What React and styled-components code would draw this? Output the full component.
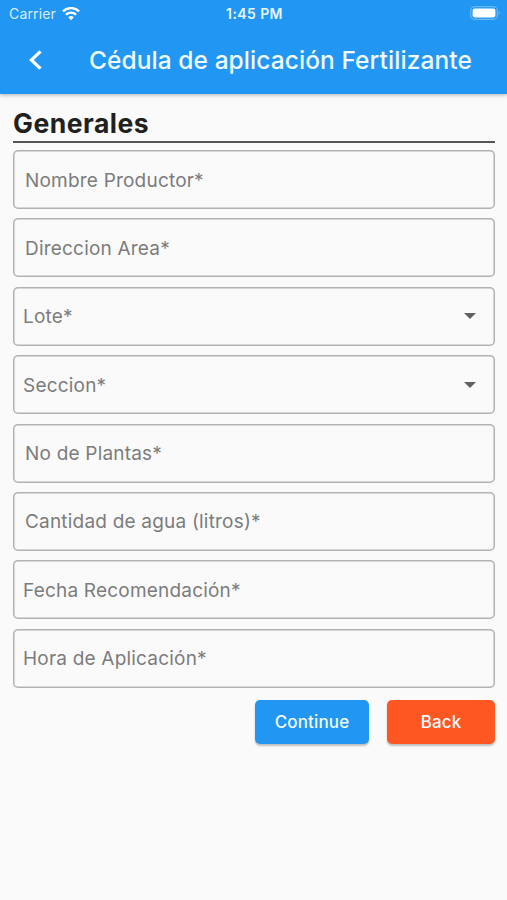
import React from "react";
import styled, { createGlobalStyle } from "styled-components";

const GlobalStyle = createGlobalStyle`
  * {
    box-sizing: border-box;
  }

  body {
    margin: 0;
    background: #fafafa;
    font-family: Inter, "Liberation Sans", sans-serif;
  }
`;

const Screen = styled.div`
  height: 900px;
  overflow: hidden;
  background: #fafafa;
`;

const Header = styled.header`
  height: 94px;
  background: #2196f3;
  color: #fff;
  box-shadow: 0 1px 4px rgba(0, 0, 0, 0.3);
`;

const StatusBar = styled.div`
  height: 27px;
  display: grid;
  grid-template-columns: 1fr auto 1fr;
  align-items: center;
  padding: 0 7px 0 9px;
`;

const Carrier = styled.div`
  display: flex;
  align-items: center;
  gap: 6px;
  font-size: 14px;
  letter-spacing: 0.15px;
  color: #d9eefd;
`;

const Clock = styled.div`
  font-size: 14px;
  font-weight: 600;
  letter-spacing: 0.4px;
  color: #eaf6ff;
`;

const BatteryIcon = styled.svg`
  justify-self: end;
  margin-top: -1px;
`;

const AppBar = styled.div`
  height: 65px;
  display: flex;
  align-items: center;
`;

const BackLink = styled.button`
  width: 89px;
  height: 65px;
  padding: 0 0 0 28px;
  border: 0;
  background: none;
  display: flex;
  align-items: center;
`;

const Title = styled.h1`
  margin: 0;
  font-size: 24.5px;
  font-weight: 500;
  line-height: 30px;
  white-space: nowrap;
  letter-spacing: 0.07px;
  color: #f0faff;
`;

const Form = styled.form`
  padding: 14px 12px 0 13px;
`;

const SectionTitle = styled.h2`
  height: 35px;
  margin: 0 0 7px;
  border-bottom: 2px solid #555;
  font-size: 26.5px;
  font-weight: 700;
  line-height: 31px;
  letter-spacing: 0.5px;
  color: #202020;
`;

const Fields = styled.div`
  display: flex;
  flex-direction: column;
  gap: 9.4px;
`;

const Field = styled.div`
  height: 59px;
  display: flex;
  align-items: center;
  justify-content: space-between;
  padding: 0 19px 0 ${props => (props.$inset ? "12px" : "10px")};
  border-radius: 5px;
  box-shadow: inset 0 0 0 1.5px #b2b2b2;
`;

const Label = styled.span`
  padding-top: 2px;
  font-size: 19px;
  line-height: 24px;
  letter-spacing: 0.2px;
  color: #7c7c7c;
`;

const Actions = styled.div`
  display: flex;
  justify-content: flex-end;
  gap: 18px;
  margin-top: 12px;
`;

const Button = styled.button`
  width: ${props => props.width};
  height: 44px;
  padding: 0;
  border: 0;
  border-radius: 5px;
  background: ${props => props.color};
  box-shadow: 0 2px 2px rgba(0, 0, 0, 0.24);
  font-family: inherit;
  font-size: 17px;
  font-weight: 500;
  letter-spacing: 0.15px;
  color: #f0faff;
`;

const fields = [
  { label: "Nombre Productor*", inset: true },
  { label: "Direccion Area*", inset: true },
  { label: "Lote*", dropdown: true },
  { label: "Seccion*", dropdown: true },
  { label: "No de Plantas*", inset: true },
  { label: "Cantidad de agua (litros)*", inset: true },
  { label: "Fecha Recomendación*" },
  { label: "Hora de Aplicación*" }
];

const Wifi = () => (
  <svg width="18" height="14" viewBox="0 0 18 14" fill="none">
    <path d="M1 4.4a11.4 11.4 0 0 1 16 0" stroke="#fff" strokeWidth="2.4" />
    <path d="M3.9 7.7a7.3 7.3 0 0 1 10.2 0" stroke="#fff" strokeWidth="2.3" />
    <path d="M9 13.2l-2.8-2.9a4 4 0 0 1 5.6 0z" fill="#fff" />
  </svg>
);

const Battery = () => (
  <BatteryIcon width="30" height="14" viewBox="0 0 30 14">
    <rect x="0.7" y="0.7" width="26.6" height="12.6" rx="3.8" fill="none" stroke="#6bb8f7" strokeWidth="1.2" />
    <rect x="2.6" y="2.5" width="22.8" height="9" rx="2.2" fill="#fff" />
    <path d="M28.6 5v4c1.6-.7 1.6-3.3 0-4z" fill="#6bb8f7" />
  </BatteryIcon>
);

const Chevron = () => (
  <svg width="15" height="20" viewBox="0 0 15 20" fill="none">
    <path d="M12.5 1.3L3.4 10l9.1 8.7" stroke="#fff" strokeWidth="3.2" />
  </svg>
);

const Caret = () => (
  <svg width="12" height="6" viewBox="0 0 12 6">
    <path d="M0 0h12L6 6z" fill="#616161" />
  </svg>
);

const App = () => {
  return (
    <Screen>
      <GlobalStyle />
      <Header>
        <StatusBar>
          <Carrier>
            Carrier
            <Wifi />
          </Carrier>
          <Clock>1:45 PM</Clock>
          <Battery />
        </StatusBar>
        <AppBar>
          <BackLink type="button" aria-label="Back">
            <Chevron />
          </BackLink>
          <Title>Cédula de aplicación Fertilizante</Title>
        </AppBar>
      </Header>
      <Form>
        <SectionTitle>Generales</SectionTitle>
        <Fields>
          {fields.map(o => (
            <Field key={o.label} $inset={o.inset}>
              <Label>{o.label}</Label>
              {o.dropdown && <Caret />}
            </Field>
          ))}
        </Fields>
        <Actions>
          <Button type="button" width="114px" color="#2196f3">
            Continue
          </Button>
          <Button type="button" width="108px" color="#ff5722">
            Back
          </Button>
        </Actions>
      </Form>
    </Screen>
  );
};
export default App;
